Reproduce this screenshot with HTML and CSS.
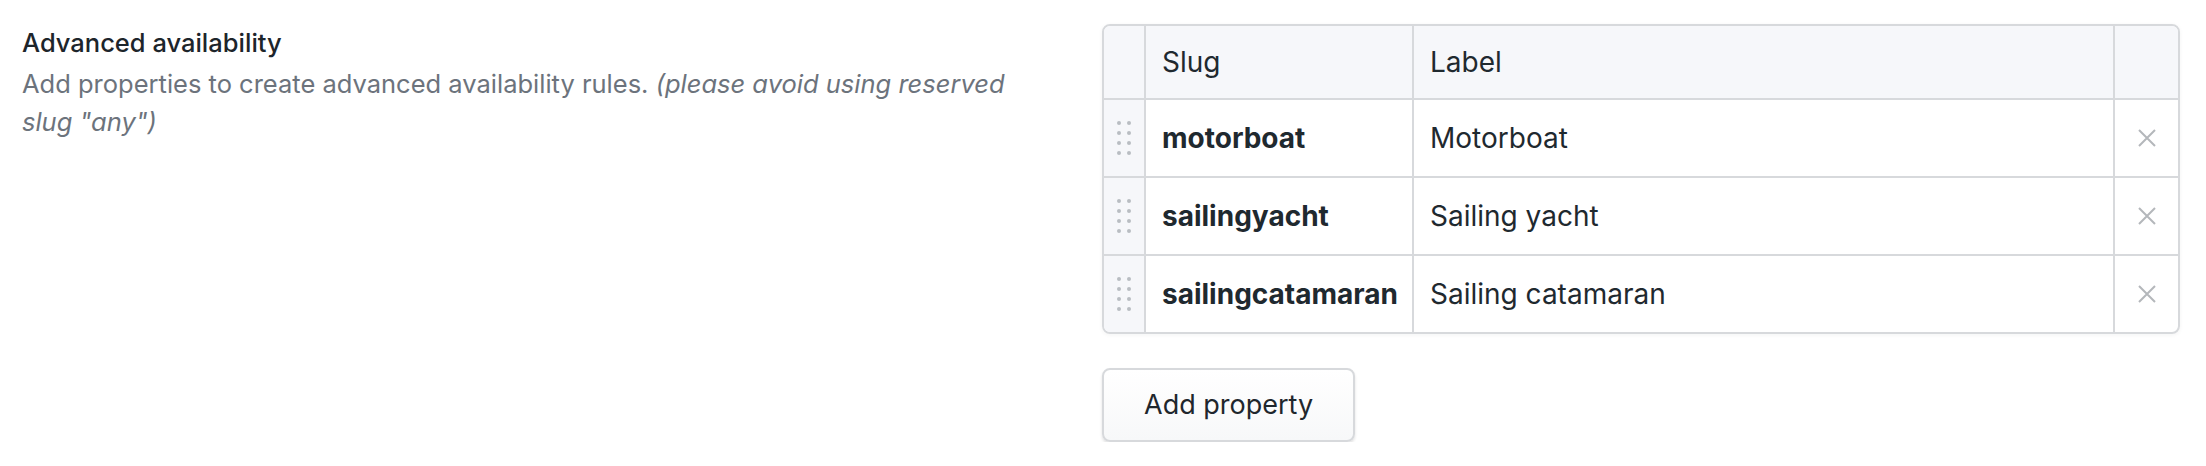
FILE: index.html
```html
<!DOCTYPE html>
<html lang="en">
<head>
<meta charset="utf-8">
<title>Advanced availability</title>
<link rel="stylesheet" href="styles.css">
</head>
<body>
<div class="section">
  <div class="info">
    <h3 class="title">Advanced availability</h3>
    <p class="desc">Add properties to create advanced availability rules. <em>(please avoid using reserved slug "any")</em></p>
  </div>
  <div class="editor">
    <div class="grid">
      <div class="cell head handle-col"></div>
      <div class="cell head">Slug</div>
      <div class="cell head">Label</div>
      <div class="cell head last-col"></div>

      <div class="cell handle-col"><span class="handle"><i></i><i></i><i></i><i></i><i></i><i></i><i></i><i></i></span></div>
      <div class="cell slug">motorboat</div>
      <div class="cell">Motorboat</div>
      <div class="cell last-col"><svg class="remove" viewBox="0 0 18 18"><path d="M1 1 L17 17 M17 1 L1 17"/></svg></div>

      <div class="cell handle-col"><span class="handle"><i></i><i></i><i></i><i></i><i></i><i></i><i></i><i></i></span></div>
      <div class="cell slug">sailingyacht</div>
      <div class="cell">Sailing yacht</div>
      <div class="cell last-col"><svg class="remove" viewBox="0 0 18 18"><path d="M1 1 L17 17 M17 1 L1 17"/></svg></div>

      <div class="cell handle-col last-row"><span class="handle"><i></i><i></i><i></i><i></i><i></i><i></i><i></i><i></i></span></div>
      <div class="cell slug last-row">sailingcatamaran</div>
      <div class="cell last-row">Sailing catamaran</div>
      <div class="cell last-col last-row"><svg class="remove" viewBox="0 0 18 18"><path d="M1 1 L17 17 M17 1 L1 17"/></svg></div>
    </div>
    <button class="add-btn" type="button">Add property</button>
  </div>
</div>
</body>
</html>
```

FILE: styles.css
```css
* { box-sizing: border-box; }
html, body { margin: 0; padding: 0; background: #ffffff; }
body {
  font-family: Inter, "Noto Sans", "Liberation Sans", sans-serif;
  font-size: 25.5px;
  line-height: 36px;
  color: #1f272d;
}
.section {
  display: flex;
  gap: 60px;
  padding: 24px 26px 0 22px;
}
.info {
  flex: 1;
  min-width: 0;
}
.title {
  margin: 2px 0 0 0;
  font-size: 25.5px;
  line-height: 34px;
  font-weight: 500;
  color: #1d252b;
}
.desc {
  margin: 5px 0 0 0;
  font-size: 25.5px;
  line-height: 38px;
  color: #6c737c;
}
.desc em { font-style: italic; }
.editor {
  width: 1078px;
  flex: none;
}
.grid {
  display: grid;
  grid-template-columns: 42px 268px 701px 63px;
  grid-template-rows: 74px 78px 78px 76px;
  border: 2px solid #d7d9dc;
  border-radius: 8px;
  overflow: hidden;
  box-shadow: 0 1px 4px rgba(20, 30, 40, 0.05);
  font-size: 28px;
}
.cell {
  display: flex;
  align-items: center;
  padding: 0 16px;
  border-right: 2px solid #d7d9dc;
  border-bottom: 2px solid #d7d9dc;
  white-space: nowrap;
  color: #1f292f;
}
.cell.last-col { border-right: none; justify-content: center; padding: 0; }
.cell.last-row { border-bottom: none; }
.cell.head { background: #f6f7fa; }
.cell.handle-col { background: #f6f7fa; padding: 0; justify-content: center; }
.cell.slug { font-weight: 700; }
.handle {
  display: grid;
  grid-template-columns: 4px 4px;
  grid-auto-rows: 4px;
  column-gap: 6px;
  row-gap: 6px;
}
.handle i {
  display: block;
  width: 4px;
  height: 4px;
  border-radius: 50%;
  background: #b9bdc2;
}
.remove {
  width: 18px;
  height: 18px;
  fill: none;
  stroke: #b4b7bb;
  stroke-width: 2;
}
.add-btn {
  margin-top: 34px;
  height: 74px;
  padding: 0 40px;
  font-family: inherit;
  font-size: 27px;
  line-height: 36px;
  color: #1f272d;
  background: linear-gradient(#ffffff, #f7f8f9);
  border: 2px solid #d7d9dc;
  border-radius: 8px;
  box-shadow: 0 2px 3px rgba(0, 0, 0, 0.12);
  cursor: pointer;
}
```
